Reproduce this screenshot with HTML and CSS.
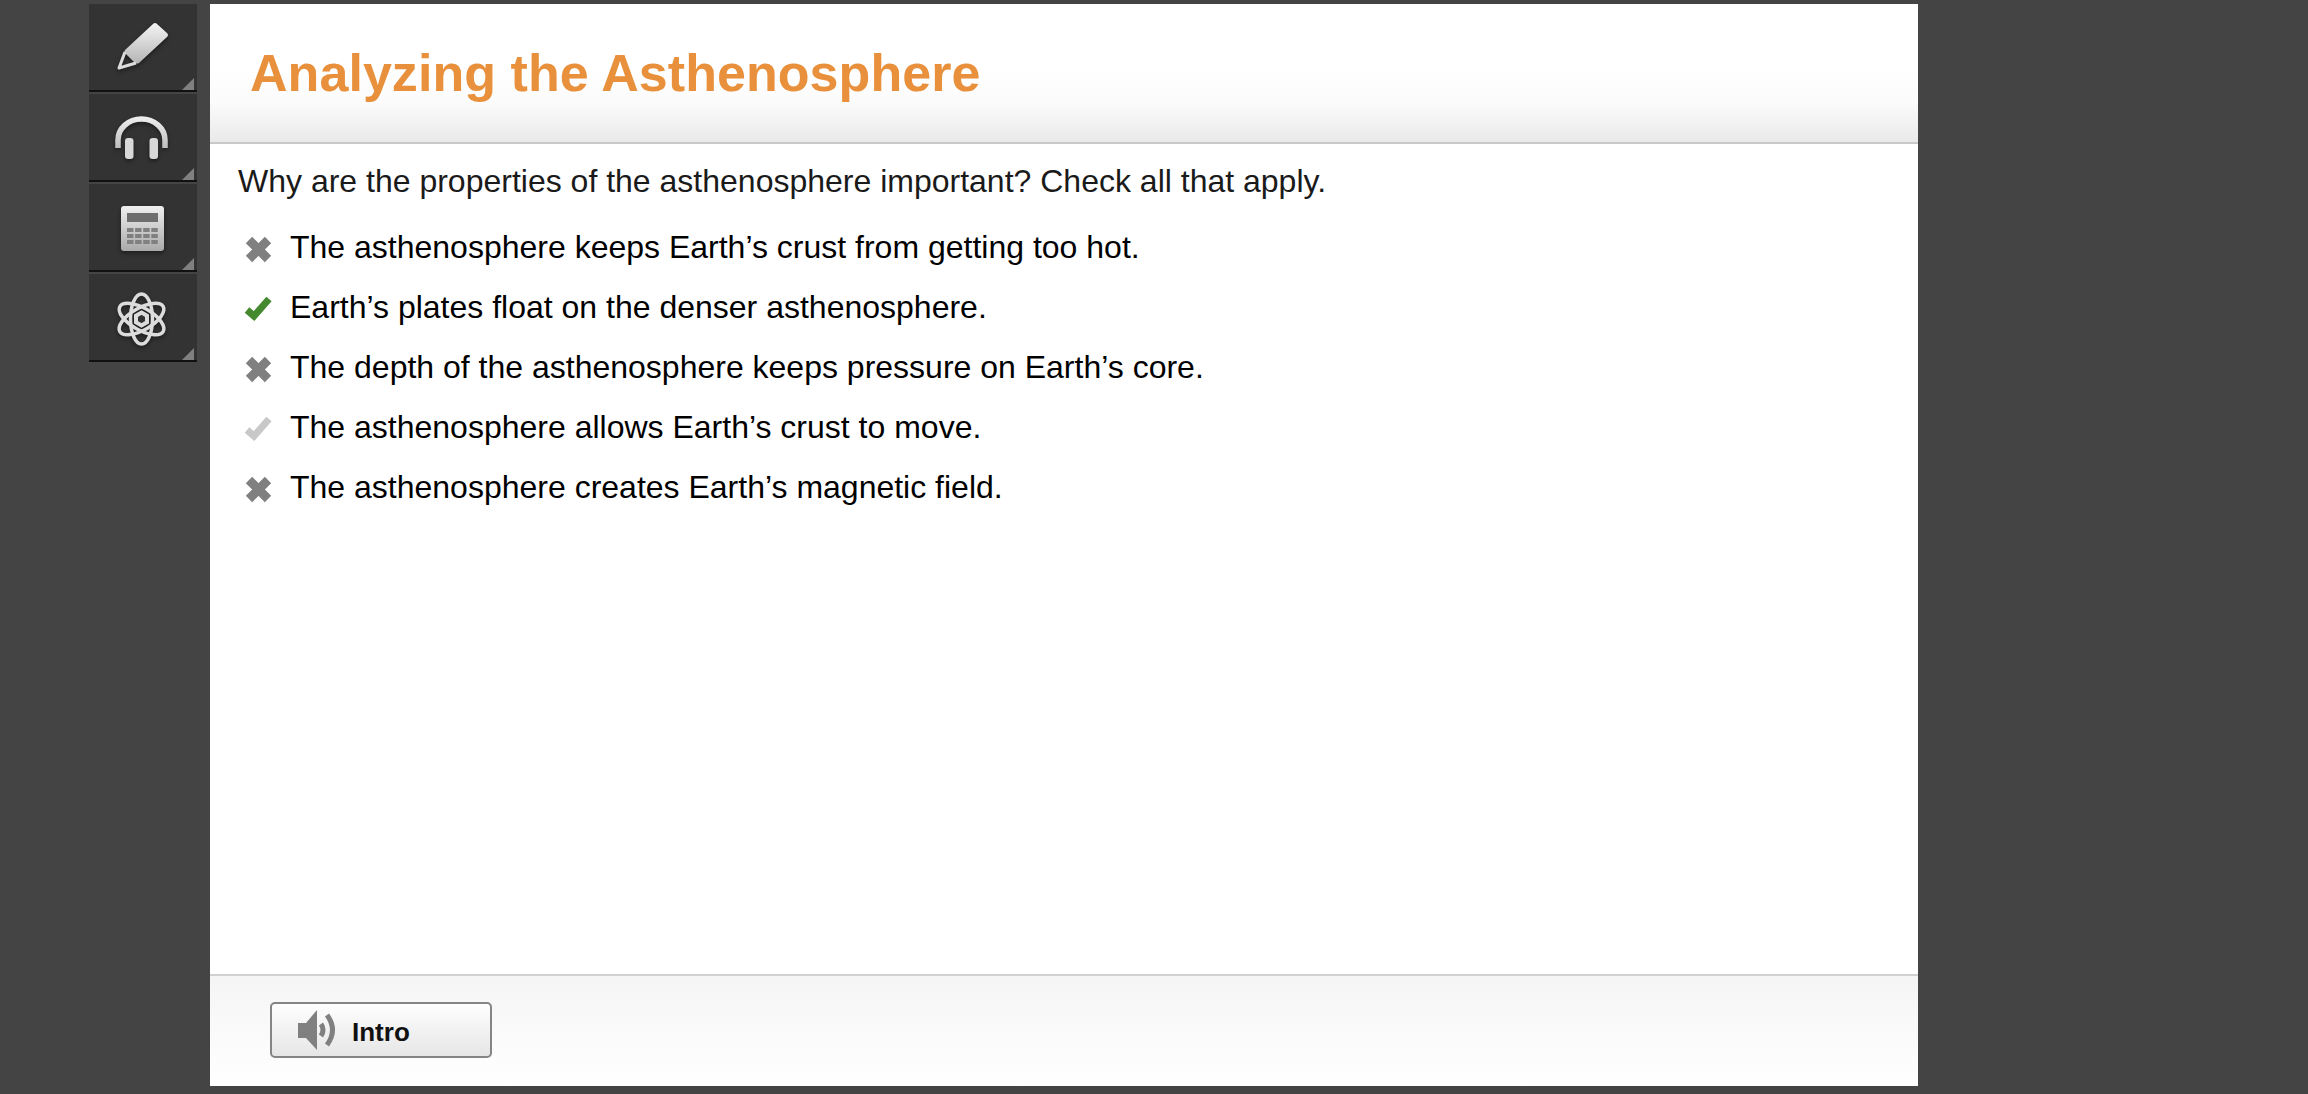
FILE: index.html
```html
<!DOCTYPE html>
<html lang="en">
<head>
    <meta charset="UTF-8">
    <title>Analyzing the Asthenosphere</title>
    <link rel="stylesheet" href="styles.css">
</head>
<body>
    <svg class="defs" width="0" height="0">
        <defs>
            <linearGradient id="tool" gradientUnits="userSpaceOnUse" x1="0" y1="5" x2="0" y2="55">
                <stop offset="0" stop-color="#f6f6f6"/>
                <stop offset="1" stop-color="#a8a8a8"/>
            </linearGradient>
            <path id="cross" d="M4 6 L23 25 M23 6 L4 25"/>
            <path id="check" d="M2 16 L9 22 L24 5"/>
        </defs>
    </svg>

    <div class="tools">
        <div class="tool">
            <svg width="60" height="60" viewBox="0 0 60 60">
                <path d="M12 33 L40 7 Q42 5 44 7 L54 16 Q56 18 54 20 L26 46 Q24 47 22 46 L12 36 Q11 34 12 33 Z" fill="url(#tool)"/>
                <path d="M12 35 L6 51 L23 46" fill="none" stroke="#dcdcdc" stroke-width="3" stroke-linejoin="round"/>
            </svg>
        </div>
        <div class="tool">
            <svg width="60" height="60" viewBox="0 0 60 60">
                <path d="M5 41 V33 A23.500 21 0 0 1 52 33 V41" fill="none" stroke="url(#tool)" stroke-width="5.500"/>
                <rect x="12" y="31" width="8.500" height="21" rx="3" fill="#d8d8d8"/>
                <rect x="36.500" y="31" width="8.500" height="21" rx="3" fill="#d8d8d8"/>
            </svg>
        </div>
        <div class="tool">
            <svg width="60" height="60" viewBox="0 0 60 60">
                <rect x="8" y="9" width="43" height="45" rx="3" fill="url(#tool)"/>
                <rect x="14" y="16" width="31" height="9" fill="#6e6e6e"/>
                <path d="M14 33 H45 M14 39 H45 M14 45 H45" stroke="#808080" stroke-width="4" stroke-dasharray="6.500 1.600"/>
            </svg>
        </div>
        <div class="tool">
            <svg width="60" height="60" viewBox="0 0 60 60" fill="none" stroke="#dcdcdc" stroke-width="3.500">
                <ellipse cx="28.500" cy="32" rx="11" ry="25"/>
                <ellipse cx="28.500" cy="32" rx="11" ry="25" transform="rotate(60 28.500 32)"/>
                <ellipse cx="28.500" cy="32" rx="11" ry="25" transform="rotate(-60 28.500 32)"/>
                <path d="M28.500 25.500 L34 28.700 V35.300 L28.500 38.500 L23 35.300 V28.700 Z" stroke-width="4" fill="#333"/>
            </svg>
        </div>
    </div>

    <main class="card">
        <header class="card-header">
            <h1>Analyzing the Asthenosphere</h1>
        </header>
        <section class="card-body">
            <p class="question">Why are the properties of the asthenosphere important? Check all that apply.</p>
            <ul class="answers">
                <li><svg class="mark wrong" viewBox="0 0 28 28"><use href="#cross"/></svg>The asthenosphere keeps Earth’s crust from getting too hot.</li>
                <li><svg class="mark right" viewBox="0 0 28 28"><use href="#check"/></svg>Earth’s plates float on the denser asthenosphere.</li>
                <li><svg class="mark wrong" viewBox="0 0 28 28"><use href="#cross"/></svg>The depth of the asthenosphere keeps pressure on Earth’s core.</li>
                <li><svg class="mark missed" viewBox="0 0 28 28"><use href="#check"/></svg>The asthenosphere allows Earth’s crust to move.</li>
                <li><svg class="mark wrong" viewBox="0 0 28 28"><use href="#cross"/></svg>The asthenosphere creates Earth’s magnetic field.</li>
            </ul>
        </section>
        <footer class="card-footer">
            <button class="intro" type="button">
                <svg width="42" height="42" viewBox="0 0 42 42">
                    <path d="M1 14 H9 L20 1 V41 L9 29 H1 Z" fill="#808080"/>
                    <path d="M24 15 Q28 21 24 27 M30 6 Q41 21 30 36" fill="none" stroke="#808080" stroke-width="5"/>
                </svg>
                <span>Intro</span>
            </button>
        </footer>
    </main>
</body>
</html>
```

FILE: styles.css
```css
html, body { margin: 0; height: 100%; }
body { display: flex; align-items: flex-start; gap: 13px; box-sizing: border-box; padding: 4px 0 0 89px; background: #444; font-family: "Liberation Sans", Arial, sans-serif; overflow: hidden; }
.defs { position: absolute; }

.tools { width: 108px; flex: none; }
.tool { position: relative; display: flex; align-items: center; justify-content: center; height: 86px; background: #333; border-bottom: 2px solid #111; margin-bottom: 2px; }
.tool svg { filter: drop-shadow(0 2px 2px #1c1c1c) blur(0.4px); }
.tool::after { content: ""; position: absolute; right: 3px; bottom: 0; border-style: solid; border-width: 0 0 12px 12px; border-color: transparent transparent #808080 transparent; }

.card { display: flex; flex-direction: column; width: 1708px; height: 1082px; background: #fff; flex: none; }
.card-header { height: 140px; box-sizing: border-box; display: flex; align-items: center; padding: 0 0 0 40px; background: linear-gradient(#fff 45%, #fbfbfb 72%, #e9e9e9); border-bottom: 2px solid #c8c8c8; }
.card-header h1 { margin: 0; font-size: 52px; font-weight: bold; letter-spacing: 0.05px; color: #e8903c; }

.card-body { flex: 1; padding: 18px 28px 0; }
.question { margin: 0; font-size: 32px; line-height: 38px; color: #1a1a1a; }
.answers { list-style: none; margin: 17px 0 0; padding: 0; }
.answers li { display: flex; align-items: center; height: 60px; font-size: 32px; color: #000; }

.mark { width: 28px; height: 28px; margin: 2px 17px 0 7px; flex: none; fill: none; overflow: visible; filter: blur(0.5px); }
.wrong { stroke: #808080; stroke-width: 9; }
.right { stroke: #45892f; stroke-width: 7; }
.missed { stroke: #c8c8c8; stroke-width: 7; }

.card-footer { height: 112px; box-sizing: border-box; padding: 26px 0 0 60px; border-top: 2px solid #d0d0d0; background: linear-gradient(#f5f5f5, #fff); }
.intro { display: flex; align-items: center; gap: 13px; width: 222px; height: 56px; box-sizing: border-box; padding: 0 0 0 25px; border: 2px solid #858585; border-radius: 5px; background: linear-gradient(#fefefe, #e6e6e6); font: bold 26px "Liberation Sans", Arial, sans-serif; color: #111; }
.intro span { padding-top: 4px; }
```
